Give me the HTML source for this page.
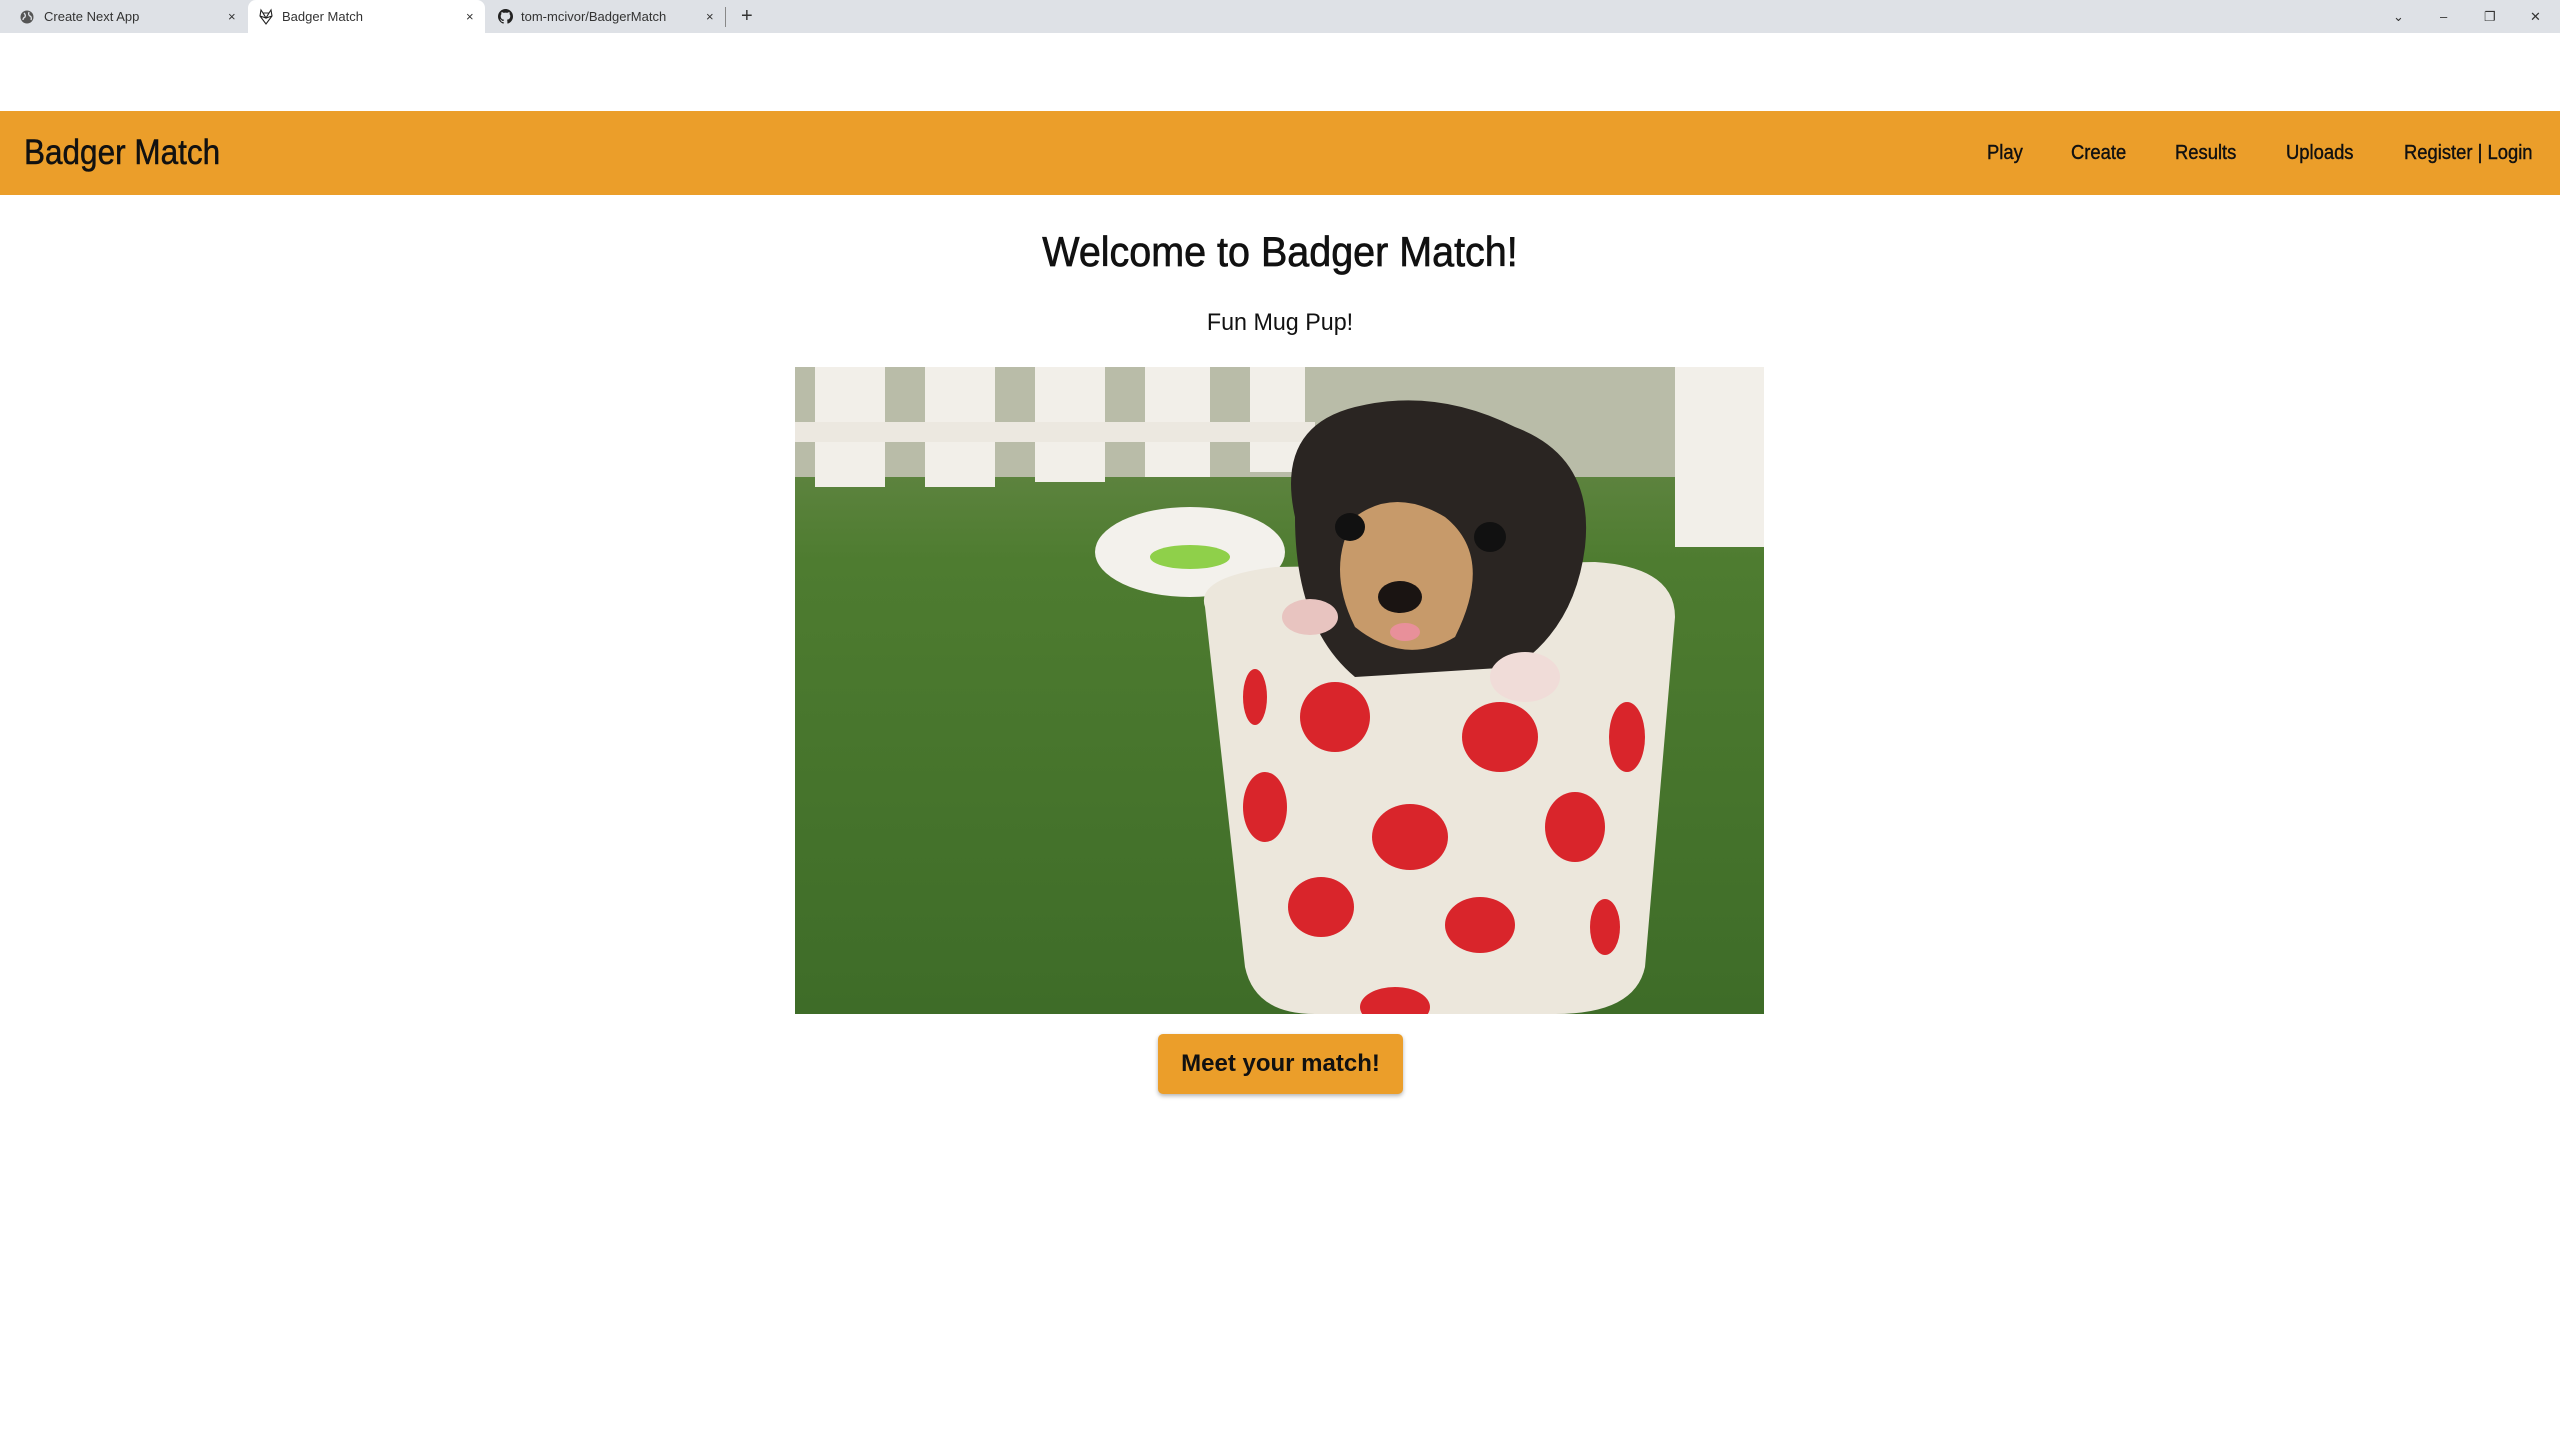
<!DOCTYPE html>
<html><head><meta charset="utf-8"><style>
*{margin:0;padding:0;box-sizing:border-box}
body{width:2560px;height:1440px;overflow:hidden;background:#fff;font-family:"Liberation Sans",Arial,sans-serif;position:relative}
.tabs{position:absolute;left:0;top:0;width:2560px;height:33px;background:#dee1e6}
.tab{position:absolute;top:0;height:33px;font-size:13px;color:#333;line-height:33px;white-space:nowrap}
.nav{position:absolute;left:0;top:111px;width:2560px;height:84px;background:#eb9e2a}
.brand{position:absolute;left:24px;top:0;line-height:84px;font-size:35px;color:#111;-webkit-text-stroke:.5px #111;transform:scaleX(.9);transform-origin:left center;white-space:nowrap}
.nav a{position:absolute;top:0;line-height:84px;font-size:20px;color:#111;text-decoration:none;-webkit-text-stroke:.4px #111;transform:scaleX(.92);transform-origin:left center;white-space:nowrap}
h1{position:absolute;top:228px;left:0;width:2560px;text-align:center;font-size:42px;font-weight:normal;color:#111;-webkit-text-stroke:.7px #111;transform:scaleX(.94)}
.sub{position:absolute;top:309px;left:0;width:2560px;text-align:center;font-size:24px;color:#111;transform:scaleX(.97)}
.img{position:absolute;left:795px;top:367px;width:969px;height:647px}
.btn{position:absolute;left:1158px;top:1034px;width:245px;height:60px;background:#eb9e2a;border-radius:5px;box-shadow:0 2px 4px rgba(0,0,0,.3);font-size:24px;font-weight:bold;text-align:center;line-height:60px;color:#111}
</style></head><body>
<div class="tabs">
<div style="position:absolute;left:248px;top:0;width:237px;height:33px;background:#fff;border-radius:8px 8px 0 0"></div>
<svg style="position:absolute;left:20px;top:10px" width="14" height="14" viewBox="0 0 14 14"><circle cx="7" cy="7" r="6.5" fill="#555"/><path d="M4 3 Q6 5 5 7 Q3 8 3 10 M9 2 Q8 5 10 6 Q12 7 11 10" stroke="#dee1e6" stroke-width="1.3" fill="none"/></svg>
<div class="tab" style="left:44px">Create Next App</div>
<div class="tab" style="left:228px">×</div>
<svg style="position:absolute;left:258px;top:8px" width="16" height="17" viewBox="0 0 16 17"><path d="M3 2 L5 5 L11 5 L13 2 L14 8 L8 16 L2 8 Z M5 5 L8 10 L11 5 M2 8 L8 10 L14 8" stroke="#222" stroke-width="1.1" fill="none"/></svg>
<div class="tab" style="left:282px">Badger Match</div>
<div class="tab" style="left:466px">×</div>
<svg style="position:absolute;left:498px;top:9px" width="15" height="15" viewBox="0 0 16 16"><path fill="#222" d="M8 0C3.6 0 0 3.6 0 8c0 3.5 2.3 6.5 5.5 7.6.4.1.5-.2.5-.4v-1.4c-2.2.5-2.7-1-2.7-1-.4-.9-.9-1.2-.9-1.2-.7-.5.1-.5.1-.5.8.1 1.2.8 1.2.8.7 1.2 1.9.9 2.3.7.1-.5.3-.9.5-1.1-1.8-.2-3.6-.9-3.6-4 0-.9.3-1.6.8-2.1-.1-.2-.4-1 .1-2.1 0 0 .7-.2 2.2.8.6-.2 1.3-.3 2-.3s1.4.1 2 .3c1.5-1 2.2-.8 2.2-.8.4 1.1.2 1.9.1 2.1.5.6.8 1.3.8 2.1 0 3.1-1.9 3.7-3.6 3.9.3.3.5.8.5 1.5v2.2c0 .2.1.5.6.4C13.7 14.5 16 11.5 16 8c0-4.4-3.6-8-8-8z"/></svg>
<div class="tab" style="left:521px">tom-mcivor/BadgerMatch</div>
<div class="tab" style="left:706px">×</div>
<div style="position:absolute;left:725px;top:7px;width:1px;height:20px;background:#888"></div>
<div class="tab" style="left:741px;font-size:20px">+</div>
<div class="tab" style="left:2393px">⌄</div>
<div class="tab" style="left:2440px">–</div>
<div class="tab" style="left:2484px">❐</div>
<div class="tab" style="left:2530px">✕</div>
</div>
<div class="nav"><div class="brand">Badger Match</div>
<a style="left:1987px">Play</a><a style="left:2071px">Create</a><a style="left:2175px">Results</a><a style="left:2286px">Uploads</a><a style="left:2404px">Register | Login</a></div>
<h1>Welcome to Badger Match!</h1>
<div class="sub">Fun Mug Pup!</div>
<svg class="img" viewBox="0 0 969 647" preserveAspectRatio="none">
<defs><linearGradient id="g" x1="0" y1="0" x2="0" y2="1"><stop offset="0" stop-color="#6f8c50"/><stop offset=".3" stop-color="#4e7c30"/><stop offset="1" stop-color="#3e6c28"/></linearGradient></defs>
<rect width="969" height="647" fill="url(#g)"/>
<rect width="969" height="110" fill="#b9bca8"/>
<g fill="#f2efe9"><rect x="20" y="0" width="70" height="120"/><rect x="130" y="0" width="70" height="120"/><rect x="240" y="0" width="70" height="115"/><rect x="350" y="0" width="65" height="110"/><rect x="455" y="0" width="55" height="105"/><rect x="880" y="0" width="89" height="180"/></g>
<rect x="0" y="55" width="520" height="20" fill="#ece8e0"/>
<ellipse cx="395" cy="185" rx="95" ry="45" fill="#f3f1ec"/><ellipse cx="395" cy="190" rx="40" ry="12" fill="#8fd04a"/>
<path d="M410 240 Q400 210 480 200 L800 195 Q880 200 880 250 L850 600 Q840 647 760 647 L520 647 Q460 647 450 600 Z" fill="#ece7dc"/>
<path d="M500 150 Q480 60 560 40 Q640 20 720 60 Q800 90 790 180 Q780 260 720 300 L560 310 Q500 260 500 150Z" fill="#2a2522"/>
<path d="M560 150 Q600 120 650 150 Q700 190 660 270 Q610 300 560 260 Q530 200 560 150Z" fill="#c79a6a"/>
<ellipse cx="555" cy="160" rx="15" ry="14" fill="#111"/><ellipse cx="695" cy="170" rx="16" ry="15" fill="#111"/>
<ellipse cx="605" cy="230" rx="22" ry="16" fill="#1a1412"/><ellipse cx="610" cy="265" rx="15" ry="9" fill="#e8909a"/>
<ellipse cx="515" cy="250" rx="28" ry="18" fill="#e8c4c0"/><ellipse cx="730" cy="310" rx="35" ry="25" fill="#f0dcd8"/>
<g fill="#d9252b"><ellipse cx="540" cy="350" rx="35" ry="35"/><ellipse cx="705" cy="370" rx="38" ry="35"/><ellipse cx="780" cy="460" rx="30" ry="35"/><ellipse cx="615" cy="470" rx="38" ry="33"/><ellipse cx="470" cy="440" rx="22" ry="35"/><ellipse cx="526" cy="540" rx="33" ry="30"/><ellipse cx="685" cy="558" rx="35" ry="28"/><ellipse cx="600" cy="640" rx="35" ry="20"/><ellipse cx="832" cy="370" rx="18" ry="35"/><ellipse cx="460" cy="330" rx="12" ry="28"/><ellipse cx="810" cy="560" rx="15" ry="28"/></g>
</svg>
<div class="btn">Meet your match!</div>
</body></html>
